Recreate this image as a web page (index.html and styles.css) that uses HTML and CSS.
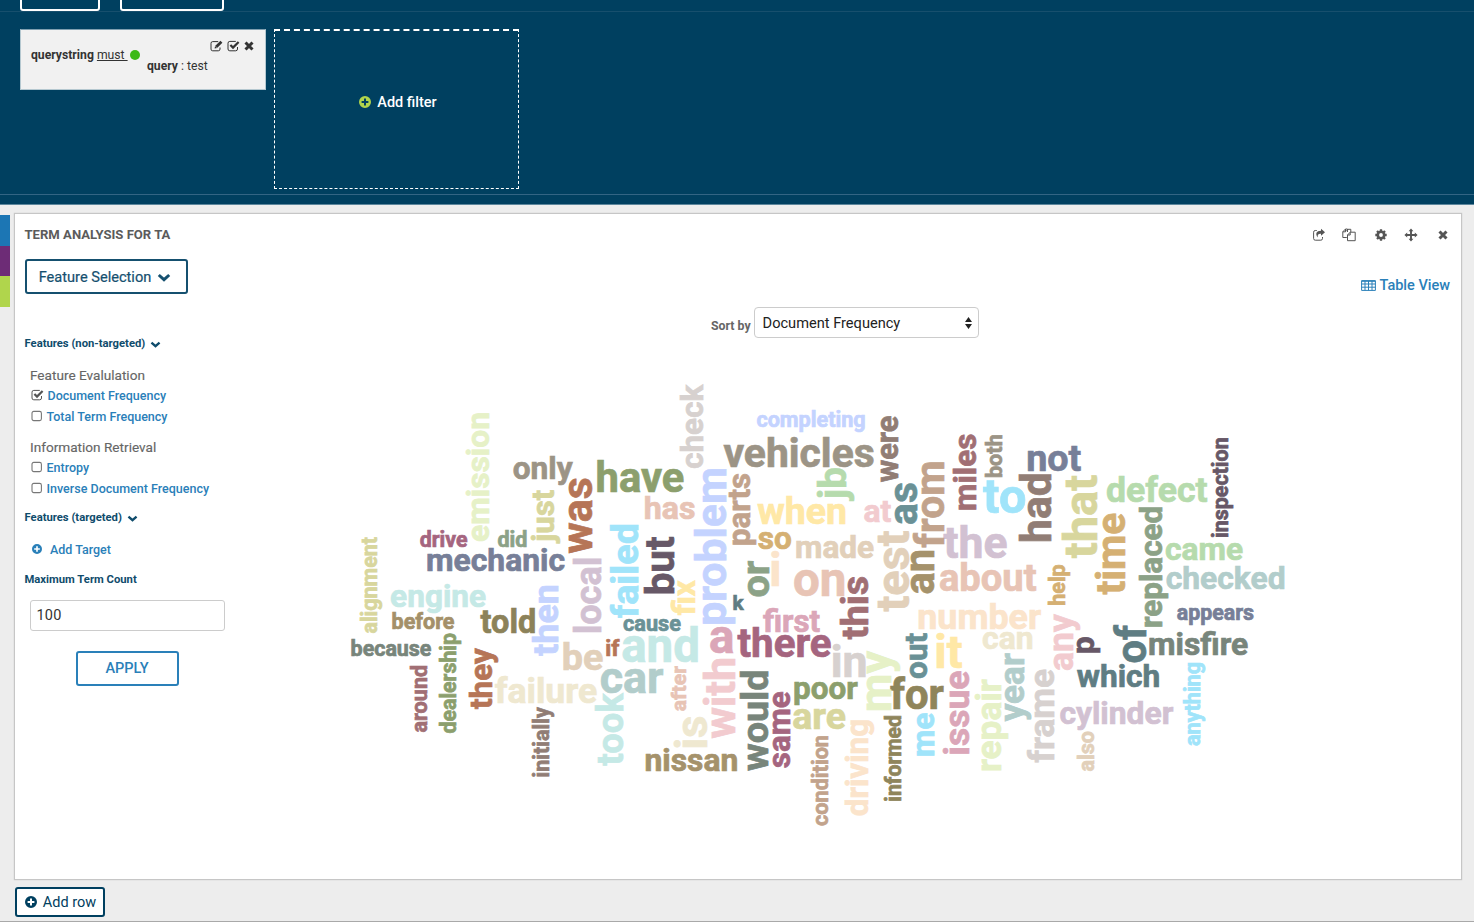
FILE: index.html
```html
<!DOCTYPE html>
<html lang="en">
<head>
<meta charset="utf-8">
<title>Term Analysis</title>
<link rel="stylesheet" href="styles.css">
</head>
<body>
<svg class="defs" width="0" height="0" aria-hidden="true">
  <symbol id="chevron" viewBox="0 0 14 9"><path d="M1.8 2l5.2 4.7L12.2 2" fill="none" stroke="currentColor" stroke-width="3"/></symbol>
  <symbol id="plus" viewBox="0 0 12 12"><path fill-rule="evenodd" fill="currentColor" d="M6 0a6 6 0 1 1 0 12A6 6 0 0 1 6 0zM5 2.6V5H2.6v2H5v2.4h2V7h2.4V5H7V2.6z"/></symbol>
  <symbol id="cross" viewBox="0 0 10 10"><path d="M1.5 1.5l7 7M8.5 1.5l-7 7" stroke="currentColor" stroke-width="3"/></symbol>
  <symbol id="box" viewBox="0 0 12 12"><rect x="1" y="1.4" width="9.4" height="9.2" rx="1.8" fill="#fff" stroke="#777" stroke-width="1.1"/></symbol>
  <symbol id="checked" viewBox="0 0 13 12"><path d="M10.5 7v2a1.8 1.8 0 0 1-1.8 1.8H2.8A1.8 1.8 0 0 1 1 9V3.2a1.8 1.8 0 0 1 1.8-1.8h6" fill="none" stroke="currentColor" stroke-width="1"/><path d="M3.4 5l2.6 2.6L11.6 2" fill="none" stroke="currentColor" stroke-width="2.2"/></symbol>
  <symbol id="edit" viewBox="0 0 13 12"><path d="M10 7.5v1.6a1.7 1.7 0 0 1-1.7 1.7H2.7A1.7 1.7 0 0 1 1 9.100V3.300a1.700 1.700 0 0 1 1.700-1.700h5.500" fill="none" stroke="currentColor"/><path d="M4.600 8.500l.5-2.500L10.500.8l1.900 1.900L7.100 8z" fill="currentColor"/><path d="M5.500 6.300l1.400 1.400" stroke="#f1f1f1" stroke-width=".7"/></symbol>
</svg>

<header class="header">
  <div class="topbar"><div class="top-btn"></div><div class="top-btn wide"></div></div>
  <div class="filters">
    <div class="query">
      <div class="query-name"><b>querystring</b><span> </span><u>must&nbsp;</u><i class="dot"></i></div>
      <div class="query-side">
        <div class="query-tools">
          <svg width="13" height="12"><use href="#edit"/></svg>
          <svg width="13" height="12"><use href="#checked"/></svg>
          <svg width="10" height="10"><use href="#cross"/></svg>
        </div>
        <div class="query-value"><b>query</b> : test</div>
      </div>
    </div>
    <div class="add-filter"><svg width="12" height="12"><use href="#plus"/></svg><span>Add filter</span></div>
  </div>
</header>

<main class="row">
  <div class="tabs"><i class="blue"></i><i class="purple"></i><i class="green"></i></div>
  <section class="panel">
    <div class="panel-head">
      <h1 class="title">TERM ANALYSIS FOR TA</h1>
      <div class="tools">
        <svg width="14" height="14" viewBox="0 0 14 14"><path d="M10.500 9v1.500a1.700 1.700 0 0 1-1.700 1.700H3.300a1.700 1.700 0 0 1-1.700-1.700V4.200a1.700 1.700 0 0 1 1.700-1.700h1.500" fill="none" stroke="currentColor"/><path d="M9 .8l4 3.500-4 3.500V5.800C6.800 5.600 5.200 6.300 5.800 9.500 3 6 4.200 2.700 9 2.700z" fill="currentColor"/></svg>
        <svg width="14" height="14" viewBox="0 0 14 14"><path d="M5.500 4V1h-2L.8 3.800v5.700h4M3.500 1v2.800H.8M13.200 4.200v8.500H5.500V7l2.700-2.800zM8.200 4.200V7H5.500M8.800 4V1.300H6L4.300 3.200" fill="none" stroke="currentColor"/></svg>
        <svg width="12" height="12" viewBox="0 0 12 12"><circle cx="6" cy="6" r="3.200" fill="none" stroke="currentColor" stroke-width="2.600"/><path d="M6 .3v2M6 9.700v2M.3 6h2M9.700 6h2M2 2l1.400 1.400M8.600 8.600L10 10M10 2L8.600 3.400M3.400 8.600L2 10" stroke="currentColor" stroke-width="2.300"/></svg>
        <svg width="14" height="14" viewBox="0 0 14 14"><path d="M7 2v10M2 7h10" stroke="currentColor" stroke-width="1.900"/><path d="M7 .4l2.400 2.800H4.600zM7 13.600l2.400-2.800H4.600zM.4 7l2.800-2.400v4.800zM13.600 7l-2.800-2.400v4.800z" fill="currentColor"/></svg>
        <svg width="10" height="10"><use href="#cross"/></svg>
      </div>
    </div>
    <div class="panel-body">
      <aside class="side">
        <button class="btn feature">Feature Selection<svg width="14" height="9"><use href="#chevron"/></svg></button>
        <div class="group first"><span>Features (non-targeted)</span><svg width="11" height="7"><use href="#chevron"/></svg></div>
        <div class="caption">Feature Evalulation</div>
        <div class="opt on"><svg width="13" height="12"><use href="#checked"/></svg>Document Frequency</div>
        <div class="opt"><svg width="12" height="12"><use href="#box"/></svg>Total Term Frequency</div>
        <div class="caption second">Information Retrieval</div>
        <div class="opt"><svg width="12" height="12"><use href="#box"/></svg>Entropy</div>
        <div class="opt"><svg width="12" height="12"><use href="#box"/></svg>Inverse Document Frequency</div>
        <div class="group targeted"><span>Features (targeted)</span><svg width="11" height="7"><use href="#chevron"/></svg></div>
        <div class="target"><svg width="10" height="10"><use href="#plus"/></svg>Add Target</div>
        <div class="group count">Maximum Term Count</div>
        <div class="input">100</div>
        <button class="btn apply">APPLY</button>
      </aside>
      <div class="chart">
        <div class="table-view"><svg width="15" height="11" viewBox="0 0 15 11"><path d="M.6.6h13.800v9.800H.6zM.6 4h13.800M.6 7.200h13.800M4 1v9.400M7.500 1v9.400M11 1v9.400M.6 1.300h13.800" fill="none" stroke="currentColor" stroke-width="1"/></svg>Table View</div>
        <div class="sort"><b>Sort by</b>
          <div class="select"><span>Document Frequency</span><svg width="7" height="12" viewBox="0 0 7 12"><path d="M3.500 0L7 5H0zM3.500 12L7 7H0z" fill="#222"/></svg></div>
        </div>
        <svg class="cloud" id="cloud" width="960" height="470" viewBox="340 370 960 470"></svg>
      </div>
    </div>
  </section>
</main>
<footer class="footer"><button class="btn add-row"><svg width="12" height="12"><use href="#plus"/></svg>Add row</button></footer>
<script src="cloud.js"></script>
</body>
</html>
```

FILE: styles.css
```css
* { box-sizing: border-box; }
body { margin: 0; width: 1474px; height: 922px; overflow: hidden; background: #ededed; border-bottom: 1px solid #a9a9a9; font-family: Roboto, "Liberation Sans", sans-serif; display: flex; flex-direction: column; }
.defs { position: absolute; }
svg { display: block; flex: none; }

.header { height: 205px; flex: none; background: #004060; border-bottom: 1px solid #5d879d; }
.topbar { height: 12px; padding-left: 20px; display: flex; gap: 20px; align-items: flex-end; overflow: hidden; border-bottom: 1px solid #174f6d; }
.top-btn { width: 80px; height: 34px; border: 2px solid #fff; border-radius: 3px; flex: none; }
.top-btn.wide { width: 104px; }
.filters { height: 183px; padding: 17px 20px 0; display: flex; gap: 8px; align-items: flex-start; border-bottom: 1px solid #336584; }
.query { width: 246px; height: 61px; background: #f1f1f1; border: 1px solid #b5c8d0; border-top-color: #7f9fb0; display: flex; padding: 8px 11px 0 10px; font-size: 12.200px; color: #333; }
.query-name { width: 116px; flex: none; height: 34px; line-height: 34px; display: flex; white-space: pre; }
.dot { width: 10px; height: 10px; border-radius: 50%; background: #3cb916; margin: 12px 0 0 2px; flex: none; }
.query-side { flex: 1; }
.query-tools { display: flex; justify-content: flex-end; align-items: center; gap: 4px; height: 15px; color: #333; }
.query-value { line-height: 26px; }
.add-filter { width: 245px; height: 160px; border: 1px dashed #fff; border-top-width: 2px; display: flex; justify-content: center; padding: 62px 0 0 3px; gap: 6px; color: #fff; font-size: 14.500px; font-weight: 500; line-height: 20px; }
.add-filter svg { margin-top: 3px; color: #b0d54c; }

.row { height: 676px; flex: none; padding-top: 8px; display: flex; gap: 4px; }
.tabs { width: 10px; padding-top: 2px; }
.tabs i { display: block; height: 30.500px; }
.blue { background: #1c76b4; }
.purple { background: #6d2c76; }
.green { background: #b0d54c; }
.panel { width: 1448px; height: 667px; background: #fff; border: 1px solid #c6c6c6; box-shadow: 0 0 1px #bbb; }
.panel-head { height: 31px; padding: 11px 13px 0 9.500px; display: flex; justify-content: space-between; }
.title { margin: 0; font-size: 13.100px; font-weight: 700; line-height: 20px; color: #5b5b5b; }
.tools { display: flex; align-items: center; height: 20px; color: #555; }
.tools svg + svg { margin-left: 16px; }
.tools svg:nth-child(3) { margin-left: 19px; }
.tools svg:nth-child(4) { margin-left: 17px; }
.tools svg:nth-child(5) { margin-left: 20px; }
.panel-body { display: flex; }
.side { width: 225px; padding-left: 9.500px; flex: none; }

.btn { display: flex; align-items: center; justify-content: center; background: #fff; border: 2px solid #15506f; border-radius: 3px; color: #15506f; font-family: inherit; font-size: 14.500px; padding: 0; }
.feature { margin-top: 14px; width: 163px; height: 35px; gap: 6px; padding: 1px 2px 0 0; font-size: 14.600px; -webkit-text-stroke: .2px; }
.group { height: 20px; line-height: 20px; font-size: 11.250px; font-weight: 700; color: #0f4c6c; display: flex; align-items: center; gap: 5px; }
.group.first { margin-top: 40px; }
.group.targeted { margin-top: 9px; }
.group.count { margin-top: 10px; }
.caption { margin: 11px 0 0 5.500px; height: 20px; line-height: 20px; font-size: 13.600px; color: #666; -webkit-text-stroke: .15px; }
.caption.second { margin-top: 10px; }
.opt { height: 21px; margin-left: 6px; padding-bottom: 1px; display: flex; align-items: center; gap: 4px; font-size: 12.500px; font-weight: 500; color: #2a80b9; white-space: nowrap; }
.opt svg { color: #555; }
.target { margin: 11px 0 0 7px; height: 21px; padding-bottom: 1px; display: flex; align-items: center; gap: 8.500px; font-size: 12.500px; font-weight: 500; color: #2a80b9; }
.input { margin: 10px 0 0 5px; width: 195px; height: 31px; line-height: 30px; padding-left: 6px; border: 1px solid #ccc; border-radius: 3px; font-size: 14.500px; color: #333; letter-spacing: .2px; }
.apply { margin: 20px 0 0 51px; width: 103px; height: 35px; border-color: #2a80b9; color: #2a80b9; font-weight: 500; font-size: 14.500px; }

.chart { width: 1220px; }
.table-view { margin: 30px 10px 0 0; height: 20px; padding-top: 1px; display: flex; justify-content: flex-end; align-items: center; gap: 3px; font-size: 14.500px; font-weight: 500; color: #2a80b9; }
.sort { margin: 12px 0 0 471px; height: 31px; display: flex; align-items: center; gap: 3px; }
.sort b { font-size: 12.300px; color: #666; padding-top: 7px; white-space: nowrap; }
.select { width: 225px; height: 31px; flex: none; border: 1px solid #ccc; border-radius: 4px; display: flex; align-items: center; justify-content: space-between; padding: 0 6px 0 8px; font-size: 14.600px; color: #222; }
.select span { padding-top: 1px; }
.cloud { margin: 32px 0 0 100px; font-family: Roboto, "Liberation Sans", sans-serif; font-weight: 700; }

.footer { padding: 6px 0 0 15px; }
.add-row { width: 90px; height: 30px; gap: 6px; padding-left: 1px; border-color: #004060; color: #004060; font-size: 14.500px; }
```

FILE: cloud.js
```javascript
// Horizontal words: text, left edge, right edge, baseline, colour, optional size
const across = [
  ["drive", 420, 467.3, 546.7, "#a5657f"], ["did", 497.7, 526.7, 547.3, "#8ca287"],
  ["only", 513.3, 573, 479.3, "#9c9486"], ["mechanic", 427.3, 564.5, 570.7, "#777f98"],
  ["engine", 390.7, 485.7, 606.7, "#c5e9e6"], ["before", 392.3, 454.3, 628.7, "#a49069"],
  ["told", 480.3, 534.9, 632.7, "#8c8259"], ["because", 351.3, 431.3, 655.7, "#78857b"],
  ["failure", 494.7, 596.7, 703.3, "#efe8d0"], ["be", 563.3, 602.7, 669.7, "#e2d0ba"],
  ["have", 597.3, 683.7, 491.7, "#8c9f6d"], ["has", 645, 694.7, 518.7, "#e8c4b5"],
  ["cause", 623.3, 680.7, 631.5, "#6a9196"], ["if", 606, 619.7, 655.7, "#b67557"],
  ["and", 622.3, 697.7, 661.7, "#c5e9e6"], ["car", 600.7, 663.3, 692.7, "#b2cdcb"],
  ["a", 710, 733.3, 653.3, "#dba6b8"], ["nissan", 645.7, 737, 771, "#a5926b"],
  ["k", 733.3, 744.3, 610.3, "#5f7d83"], ["completing", 756.7, 865, 426.7, "#c4d3ff"],
  ["vehicles", 723.3, 873.7, 466.7, "#9c9486"], ["when", 757.3, 845.5, 523.7, "#ffe8a6"],
  ["at", 864, 891, 521.7, "#f2cbcf"], ["made", 796.3, 873.7, 557.7, "#e2d0ba"],
  ["so", 758.3, 791.3, 548.7, "#d5b073"], ["i", 771.3, 779.3, 585.7, "#fbe4cb", 46],
  ["on", 794, 844.3, 595.7, "#e8c4b5"], ["first", 763, 820, 631.7, "#dba6b8"],
  ["there", 737.3, 831, 656.7, "#a5657f"], ["in", 832.7, 865.7, 676.7, "#d7d1cf"],
  ["poor", 794.3, 857.7, 699.5, "#8c9f6d"], ["are", 793, 845.3, 729.3, "#d8d69d"],
  ["for", 890, 943.7, 708.7, "#8f855b"], ["to", 983, 1025.3, 512.9, "#a0e4fa"],
  ["not", 1027.7, 1081, 470.7, "#777f98"], ["the", 943.3, 1006.7, 558.3, "#d2c1d2"],
  ["about", 939.7, 1036.3, 590.7, "#e8c4b5"], ["number", 918.7, 1041, 628.7, "#fbe4cb"],
  ["can", 982.7, 1032.3, 648.7, "#efe8d0"], ["it", 936.3, 962, 667.7, "#ffe8a6"],
  ["defect", 1106.7, 1207.3, 501.7, "#b6dbad"], ["came", 1165.7, 1242.7, 559.7, "#b6dbad"],
  ["checked", 1166.3, 1284.3, 588.7, "#b2cdcb"], ["appears", 1177, 1253.7, 619.9, "#777f98"],
  ["misfire", 1149.3, 1247.7, 654.7, "#78857b"], ["which", 1076.7, 1159, 687.3, "#5f7d83"],
  ["cylinder", 1060, 1173.3, 723.7, "#d2c1d2"]
];
// Vertical words, read upwards: text, bottom edge, top edge, baseline x, colour
const upward = [
  ["emission", 541.3, 413.3, 489, "#e6f1c7"], ["alignment", 633.3, 537, 377.7, "#d8d69d"],
  ["just", 543.7, 490, 554.5, "#d8d69d"], ["was", 553.7, 478.3, 592.5, "#b67557"],
  ["then", 656, 585.5, 558.5, "#c4d3ff"], ["local", 632.5, 558.5, 601.5, "#d2c1d2"],
  ["around", 732.3, 665.5, 427.5, "#a16f74"], ["dealership", 733.3, 633.3, 456.5, "#8c9f6d"],
  ["they", 709.3, 647.7, 491.9, "#b67557"], ["initially", 776.7, 706.7, 549.5, "#917d75"],
  ["took", 765.7, 692.7, 623, "#c5e9e6"], ["check", 468.3, 384, 703, "#d7d1cf"],
  ["problem", 624, 468.8, 726.3, "#c4d3ff"], ["failed", 618.3, 524.7, 638.5, "#a0e4fa"],
  ["but", 593.7, 536.7, 674.3, "#675867"], ["fix", 615.3, 580, 695, "#ffe8a6"],
  ["parts", 544.7, 473.7, 750, "#c2a38c"], ["or", 596.7, 560.7, 769.5, "#8ca287"],
  ["with", 738.7, 658.7, 735, "#f2cbcf"], ["after", 711, 666, 686.3, "#e8c4b5"],
  ["is", 747.7, 716.7, 706.9, "#efe8d0"], ["would", 771, 671, 768.7, "#78857b"],
  ["same", 767.7, 691.7, 790.2, "#a5657f"], ["were", 482.3, 416, 898.5, "#917d75"],
  ["jb", 501.2, 468, 846.2, "#b6dbad"], ["as", 524, 483, 917.3, "#6a9196"],
  ["from", 547.7, 462.3, 944.5, "#c2a38c"], ["an", 593.7, 550.7, 934.3, "#a5926b"],
  ["test", 611.7, 531, 909, "#e2d0ba"], ["this", 639.3, 576.7, 868.7, "#a16f74"],
  ["my", 710.3, 650.7, 891.3, "#e6f1c7"], ["out", 678.3, 633, 927.2, "#6a9196"],
  ["me", 755.7, 713, 934.3, "#a0e4fa"], ["driving", 815.7, 720, 867.9, "#fbe4cb"],
  ["condition", 825.7, 735.7, 827.8, "#c2a38c"], ["informed", 801, 715.7, 901.6, "#8f855b"],
  ["issue", 754, 671, 969.2, "#dba6b8"], ["repair", 770.7, 679.3, 1001, "#e6f1c7"],
  ["year", 721.7, 653.3, 1024.3, "#b2cdcb"], ["frame", 762.7, 669.3, 1054.5, "#d7d1cf"],
  ["miles", 509.7, 434.3, 976.2, "#a16f74"], ["both", 477.3, 435, 1002, "#9c9486"],
  ["had", 541.3, 474, 1051.1, "#917d75"], ["that", 558.3, 475.3, 1097.6, "#d8d69d"],
  ["help", 605, 564.7, 1065.7, "#d5b073"], ["any", 670.3, 613.7, 1073.7, "#f2cbcf"],
  ["p", 653, 637, 1094.5, "#675867"], ["time", 594.7, 513.3, 1125, "#d5b073"],
  ["replaced", 626.7, 507, 1162.6, "#8ca287"], ["inspection", 537.3, 438, 1228.3, "#675867"],
  ["of", 662.7, 624.7, 1146.2, "#5f7d83"], ["anything", 745.7, 662.7, 1200.4, "#a0e4fa"],
  ["also", 771.3, 731.3, 1094.4, "#e2d0ba"]
];

const OUTLINE = 0.7;
const cloud = document.getElementById("cloud");
const ctx = document.createElement("canvas").getContext("2d");
ctx.font = '700 200px Roboto, "Liberation Sans", sans-serif';

// Scales a word so that its ink fills the given length
function fit(text, length, fixed) {
  const m = ctx.measureText(text);
  const size = fixed || 200 * length / (m.actualBoundingBoxLeft + m.actualBoundingBoxRight);
  return { size, bearing: m.actualBoundingBoxLeft * size / 200 };
}
function draw(text, size, fill, transform) {
  const node = document.createElementNS("http://www.w3.org/2000/svg", "text");
  node.textContent = text;
  node.setAttribute("font-size", size.toFixed(2));
  node.setAttribute("fill", fill);
  node.setAttribute("stroke", fill);
  node.setAttribute("stroke-width", OUTLINE);
  node.setAttribute("transform", transform);
  cloud.appendChild(node);
}
for (const [text, left, right, base, fill, fixed] of across) {
  const f = fit(text, right - left - OUTLINE, fixed);
  draw(text, f.size, fill, `translate(${left + OUTLINE / 2 + f.bearing} ${base - 0.1})`);
}
for (const [text, bottom, top, base, fill] of upward) {
  const f = fit(text, bottom - top - OUTLINE);
  draw(text, f.size, fill, `translate(${base - 0.3} ${bottom - OUTLINE / 2 - f.bearing}) rotate(-90)`);
}
```
